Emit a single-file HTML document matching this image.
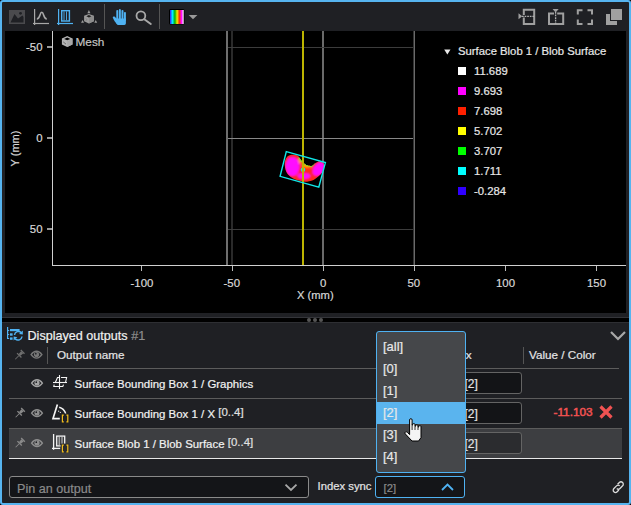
<!DOCTYPE html>
<html><head><meta charset="utf-8">
<style>
html,body{margin:0;padding:0;background:#000;width:631px;height:505px;overflow:hidden}
*{box-sizing:border-box}
#frame{position:absolute;left:0;top:0;width:631px;height:505px;border:2px solid #56b4f0;border-radius:3px;background:#1f2024;overflow:hidden}
.t{position:absolute;font-family:"Liberation Sans",sans-serif;white-space:nowrap;line-height:1;-webkit-text-stroke:0.2px currentColor}
svg{position:absolute;left:0;top:0}
</style></head><body>
<div id="frame"></div>
<!-- plot bg -->
<div style="position:absolute;left:5px;top:31px;width:621px;height:282px;background:#000"></div>
<!-- splitter -->
<div style="position:absolute;left:2px;top:317px;width:627px;height:1px;background:#34353a"></div>
<div style="position:absolute;left:2px;top:318px;width:627px;height:4px;background:#000"></div>
<div style="position:absolute;left:2px;top:322px;width:627px;height:1px;background:#2e2f33"></div>

<svg width="631" height="505" viewBox="0 0 631 505">
  <!-- ===== toolbar ===== -->
  <!-- image icon -->
  <rect x="9" y="10" width="16" height="14" fill="#4a4a4d"/>
  <path d="M10.5 22.5 L14.5 14 L18 18.5 L22.5 15.5 L23.5 17 L23.5 22.5 Z" fill="#1f2024"/>
  <circle cx="20.5" cy="13.3" r="1.4" fill="#1f2024"/>
  <!-- curve icon -->
  <g stroke="#a8a8a8" stroke-width="1.2" fill="none">
    <path d="M34.6 9 V25"/><path d="M33 23.5 H49"/>
    <path d="M36.8 19 C38.6 19 39.2 17.5 40 15 C40.6 13 41.1 12.3 41.8 12.3 C42.5 12.3 43 13 43.6 15 C44.4 17.5 45 19 46.8 19" stroke-width="1.6"/>
  </g>
  <!-- blue bar icon -->
  <g stroke="#4fb2f2" fill="none">
    <path d="M58.6 9 V25" stroke-width="1.2"/><path d="M57 23.5 H73" stroke-width="1.2"/>
    <rect x="61.7" y="10.7" width="7.7" height="10.3" stroke-width="1.4"/>
    <path d="M64 11.4 V20.3 M66.5 11.4 V20.3" stroke-width="0.9"/>
  </g>
  <!-- cube axes icon -->
  <path d="M88.9 10 L90.4 13.2 L87.4 13.2 Z" fill="#9a9a9a"/>
  <path d="M88.9 14.1 L93.9 15.8 L93.9 21.3 L88.9 23.4 L84.1 21.3 L84.1 15.8 Z" fill="#9c9c9c"/>
  <path d="M88.9 17.6 L93.9 15.8 L93.9 21.3 L88.9 23.4 Z" fill="#8c8c8c"/>
  <path d="M88.9 14.9 L91.5 16.2 L88.9 17.5 L86.3 16.2 Z" fill="#202020"/>
  <path d="M85.6 18.5 L87.2 19.6 L85.6 20.7" stroke="#7a7a7a" stroke-width="0.7" fill="none"/>
  <path d="M81 22.8 L82.6 20 L84 22.8 Z" fill="#9a9a9a"/>
  <path d="M94.3 22.8 L95.7 20 L97.2 22.8 Z" fill="#9a9a9a"/>
  <rect x="104" y="4" width="1" height="25" fill="#555"/>
  <!-- hand -->
  <g fill="#4fb2f2">
    <path d="M116.3 18.5 L116.3 23.2 C116.8 24.4 117.5 25 118.5 25 L124.3 25 C125.3 25 125.9 24 125.9 23 L125.9 18.5 Z"/>
    <rect x="116.3" y="9.9" width="1.95" height="11" rx="0.97"/>
    <rect x="118.9" y="9" width="1.95" height="12" rx="0.97"/>
    <rect x="121.5" y="9.9" width="1.95" height="11" rx="0.97"/>
    <rect x="123.95" y="11.9" width="1.95" height="9" rx="0.97"/>
    <path d="M112.8 17.8 C112.8 16.6 114 16 114.8 16.8 L117.4 19.6 L117.4 24.6 C115.6 22.8 113.8 20.2 112.8 17.8 Z"/>
  </g>
  <!-- magnifier -->
  <circle cx="140.9" cy="15.8" r="4.4" stroke="#a8a8a8" stroke-width="1.8" fill="none"/>
  <path d="M144.3 19.2 L150.8 24" stroke="#a8a8a8" stroke-width="2" stroke-linecap="round"/>
  <rect x="159" y="4" width="1" height="25" fill="#555"/>
  <!-- colormap -->
  <defs>
    <linearGradient id="cm" x1="0" x2="1" y1="0" y2="0">
      <stop offset="0" stop-color="#3a10ff"/>
      <stop offset="0.18" stop-color="#00f0ff"/>
      <stop offset="0.36" stop-color="#00b000"/>
      <stop offset="0.52" stop-color="#f0f000"/>
      <stop offset="0.68" stop-color="#ff2a00"/>
      <stop offset="0.84" stop-color="#ff10ff"/>
      <stop offset="1" stop-color="#ffffff"/>
    </linearGradient>
  </defs>
  <rect x="169" y="9" width="15.5" height="15.5" rx="1.5" fill="#000"/>
  <rect x="170" y="10" width="13.7" height="14" fill="url(#cm)"/>
  <path d="M188.7 15 L197.4 15 L193 19.3 Z" fill="#9a9a9a"/>
  <!-- right toolbar icons -->
  <g fill="none" stroke="#a0a0a0" stroke-width="2">
    <path d="M523.8 15 V9.7 H534.2 V24 H523.8 V17.6"/>
    <path d="M554 13.5 H549 V24 H563.2 V13.5 H557.2"/>
  </g>
  <g stroke="#b0b0b0" stroke-width="1.3" stroke-dasharray="1.7 0.9" fill="none">
    <path d="M522 16.3 H535"/>
    <path d="M555.6 12 V25"/>
  </g>
  <path d="M518.5 13.3 L522.2 16.3 L518.5 19.3 Z" fill="#a0a0a0"/>
  <path d="M552.6 9 L558.7 9 L555.6 12.4 Z" fill="#a0a0a0"/>
  <g fill="none" stroke="#a0a0a0" stroke-width="2">
    <path d="M577.8 14.5 V10.2 H582.5"/>
    <path d="M587.5 10.2 H592 V14.5"/>
    <path d="M577.8 19.5 V24 H582.5"/>
    <path d="M587.5 24 H592 V19.5"/>
  </g>
  <rect x="611" y="9" width="11" height="11" fill="#a0a0a0"/>
  <path d="M606 14 H610 V21 H617 V25 H606 Z" fill="#a0a0a0"/>

  <!-- ===== plot ===== -->
  <g shape-rendering="crispEdges">
    <rect x="226" y="31" width="2" height="234" fill="#6e6e6e"/>
    <rect x="231" y="31" width="2" height="234" fill="#2a2a2a"/>
    <rect x="322" y="31" width="2" height="234" fill="#6a6a6a"/>
    <rect x="413" y="31" width="1" height="234" fill="#333"/>
    <rect x="414" y="31" width="1" height="234" fill="#6a6a6a"/>
    <rect x="228" y="47" width="185" height="1" fill="#3c3c3c"/>
    <rect x="228" y="138" width="185" height="1" fill="#888888"/>
    <rect x="228" y="229" width="185" height="1" fill="#3c3c3c"/>
    <rect x="302" y="31" width="2" height="234" fill="#bcb400"/>
    <!-- axes -->
    <rect x="52" y="31" width="1" height="235" fill="#d0d0d0"/>
    <rect x="52" y="265" width="574" height="1" fill="#d0d0d0"/>
    <rect x="47" y="46" width="5" height="2" fill="#999"/>
    <rect x="47" y="137" width="5" height="2" fill="#999"/>
    <rect x="47" y="228" width="5" height="2" fill="#999"/>
    <rect x="141" y="266" width="1" height="5" fill="#bbb"/>
    <rect x="232" y="266" width="1" height="5" fill="#bbb"/>
    <rect x="323" y="266" width="1" height="5" fill="#bbb"/>
    <rect x="414" y="266" width="1" height="5" fill="#bbb"/>
    <rect x="505" y="266" width="1" height="5" fill="#bbb"/>
    <rect x="596" y="266" width="1" height="5" fill="#bbb"/>
  </g>
  <!-- blob -->
  <defs>
    <filter id="bl" x="-20%" y="-20%" width="140%" height="140%"><feGaussianBlur stdDeviation="0.5"/></filter>
    <filter id="bl2" x="-50%" y="-50%" width="200%" height="200%"><feGaussianBlur stdDeviation="1.3"/></filter>
    <clipPath id="blobclip"><path d="M287.6 156.3 C285.5 158.5 284.5 161.5 284.7 164.6 C285 169 286 172 288 174.6 C291 178 295 180 298.8 180.4 C301.5 181.2 304.5 181.8 307.1 181.7 C310 181.5 313 180.5 315.4 178.8 C319 176 322 173.5 323.3 170.5 C324.5 167.5 324.3 164.5 323.3 163 C322.6 162 321.8 161.4 320.5 161.3 C319.2 161.3 318.2 161.5 317.9 161.7 C316.5 162.5 315.5 163 314.6 163.5 C313.5 165 312.5 165.8 311.3 165.9 C309.5 166 307.5 165.6 306.3 165 C304.5 164 303 162.5 302.1 161.3 C300.5 159.5 299.5 157 298 155.9 C296 154.5 292 154.6 289.8 155.2 C288.8 155.5 288 155.9 287.6 156.3 Z"/></clipPath>
  </defs>
  <g clip-path="url(#blobclip)">
    <rect x="280" y="150" width="48" height="36" fill="#ff2a18"/>
    <g filter="url(#bl2)">
      <ellipse cx="292.5" cy="166.5" rx="7.5" ry="10" fill="#ff10ff"/>
      <ellipse cx="318.5" cy="169" rx="5.5" ry="8" fill="#ff10ff" transform="rotate(35 318.5 169)"/>
      <ellipse cx="304" cy="176" rx="7" ry="3.5" fill="#ff10ff"/>
      <ellipse cx="307" cy="165.5" rx="5" ry="2.5" fill="#ffa000"/>
      <ellipse cx="300.5" cy="160" rx="2" ry="3.5" fill="#ff9a00"/>
    </g>
    <g filter="url(#bl)">
      <path d="M299 158 L303 162.5 L307 165.5 L311.5 166.2 L314.6 163.6" fill="none" stroke="#50ff30" stroke-width="1.2"/>
    </g>
    <circle cx="303" cy="169.8" r="2.2" fill="#20e0e0" filter="url(#bl)"/>
  </g>
  <rect x="302" y="31" width="2" height="234" fill="#bcb400" shape-rendering="crispEdges"/>
  <path d="M286.3 151.7 L325.4 162.6 L318.8 187.1 L280.1 176.3 Z" fill="none" stroke="#10e8e8" stroke-width="1.4"/>
  <!-- mesh cube -->
  <path d="M67.2 35.9 L72.5 38.6 L72.5 44.4 L67.2 47.1 L61.9 44.4 L61.9 38.6 Z" fill="#b4b4b4"/>
  <path d="M67.2 41.3 L72.5 38.6 L72.5 44.4 L67.2 47.1 Z" fill="#a8a8a8"/>
  <path d="M67.2 37.4 L70.3 38.9 L67.2 40.3 L64.1 38.9 Z" fill="#000"/>
  <path d="M63.4 42 L64.6 43 M64.8 43.2 L65.8 44" stroke="#444" stroke-width="0.9"/>
  <!-- legend squares -->
  <rect x="458" y="67" width="8" height="8" fill="#ffffff"/>
  <rect x="458" y="87" width="8" height="8" fill="#ff00ff"/>
  <rect x="458" y="107" width="8" height="8" fill="#ff2000"/>
  <rect x="458" y="127" width="8" height="8" fill="#ffff00"/>
  <rect x="458" y="147" width="8" height="8" fill="#00ff00"/>
  <rect x="458" y="167" width="8" height="8" fill="#00ffff"/>
  <rect x="458" y="187" width="8" height="8" fill="#3000ff"/>
  <path d="M444.2 49.5 L450.5 49.5 L447.35 54.6 Z" fill="#e8e8e8"/>
  <!-- splitter dots -->
  <circle cx="309" cy="320" r="2" fill="#555"/>
  <circle cx="315" cy="320" r="2" fill="#555"/>
  <circle cx="321" cy="320" r="2" fill="#555"/>
</svg>

<!-- plot text -->
<div class="t" style="left:75.5px;top:36.5px;font-size:11.8px;color:#c4c4c4">Mesh</div>
<div class="t" style="left:458px;top:46px;font-size:11.3px;color:#e8e8e8">Surface Blob 1 / Blob Surface</div>
<div class="t" style="left:474px;top:65.5px;font-size:11.3px;color:#e8e8e8">11.689</div>
<div class="t" style="left:474px;top:85.5px;font-size:11.3px;color:#e8e8e8">9.693</div>
<div class="t" style="left:474px;top:105.5px;font-size:11.3px;color:#e8e8e8">7.698</div>
<div class="t" style="left:474px;top:125.5px;font-size:11.3px;color:#e8e8e8">5.702</div>
<div class="t" style="left:474px;top:145.5px;font-size:11.3px;color:#e8e8e8">3.707</div>
<div class="t" style="left:474px;top:165.5px;font-size:11.3px;color:#e8e8e8">1.711</div>
<div class="t" style="left:474px;top:185.5px;font-size:11.3px;color:#e8e8e8">-0.284</div>

<div class="t" style="right:588.5px;top:41.5px;font-size:11.4px;color:#d8d8d8">-50</div>
<div class="t" style="right:588.5px;top:132.5px;font-size:11.4px;color:#d8d8d8">0</div>
<div class="t" style="right:588.5px;top:223.5px;font-size:11.4px;color:#d8d8d8">50</div>
<div class="t" style="left:130.5px;top:277.5px;font-size:11.4px;color:#d8d8d8">-100</div>
<div class="t" style="left:223.5px;top:277.5px;font-size:11.4px;color:#d8d8d8">-50</div>
<div class="t" style="left:320px;top:277.5px;font-size:11.4px;color:#d8d8d8">0</div>
<div class="t" style="left:407.5px;top:277.5px;font-size:11.4px;color:#d8d8d8">50</div>
<div class="t" style="left:496px;top:277.5px;font-size:11.4px;color:#d8d8d8">100</div>
<div class="t" style="left:587px;top:277.5px;font-size:11.4px;color:#d8d8d8">150</div>
<div class="t" style="left:297px;top:289.5px;font-size:11.2px;color:#d8d8d8">X (mm)</div>
<div class="t" style="left:-3px;top:143px;font-size:11px;color:#d8d8d8;transform:rotate(-90deg);transform-origin:center;width:36px;text-align:center">Y (mm)</div>


<!-- ===== bottom panel ===== -->
<div style="position:absolute;left:9px;top:428px;width:613px;height:30px;background:#3d3e41"></div>
<div style="position:absolute;left:9px;top:368px;width:610px;height:1px;background:#5c5c5c"></div>
<div style="position:absolute;left:9px;top:398px;width:613px;height:1px;background:#5c5c5c"></div>
<div style="position:absolute;left:9px;top:428px;width:613px;height:1px;background:#5c5c5c"></div>
<div style="position:absolute;left:9px;top:458px;width:613px;height:1px;background:#e8e8e8"></div>
<div style="position:absolute;left:47px;top:347px;width:1px;height:17px;background:#555"></div>
<div style="position:absolute;left:523px;top:347px;width:1px;height:17px;background:#555"></div>
<!-- index fields -->
<div style="position:absolute;left:455px;top:372px;width:67px;height:22px;border:1px solid #646464;border-radius:3px;background:#131417"></div>
<div style="position:absolute;left:455px;top:402px;width:67px;height:22px;border:1px solid #646464;border-radius:3px;background:#131417"></div>
<div style="position:absolute;left:455px;top:432px;width:67px;height:22px;border:1px solid #646464;border-radius:3px;background:#2b2c2f"></div>
<!-- bottom controls -->
<div style="position:absolute;left:9px;top:476px;width:300px;height:22px;border:1px solid #8a8a8a;border-radius:3px;background:#141518"></div>
<div style="position:absolute;left:375px;top:476px;width:90px;height:22px;border:1px solid #4fb2f2;border-radius:3px;background:#141518"></div>

<svg width="631" height="505" viewBox="0 0 631 505">
  <!-- displayed outputs icon -->
  <g fill="#4fb2f2">
    <rect x="7" y="327" width="1.2" height="12"/>
    <rect x="7" y="330" width="2.2" height="1"/><rect x="7" y="334" width="2.2" height="1"/><rect x="7" y="338" width="2.2" height="1"/>
    <rect x="10" y="329" width="9.6" height="2.2"/>
    <rect x="10" y="333.3" width="2.6" height="2.4"/>
    <rect x="10" y="337.4" width="2.6" height="2.4"/>
  </g>
  <g fill="none" stroke="#4fb2f2" stroke-width="1.5">
    <path d="M14.5 335 A4 4 0 0 1 21.3 332.6"/>
    <path d="M22 336.5 A4 4 0 0 1 15.2 338.9"/>
  </g>
  <path d="M22.8 330.6 L22.8 334.6 L19 334 Z" fill="#4fb2f2"/>
  <path d="M13.6 340.5 L13.6 336.6 L17.4 337.2 Z" fill="#4fb2f2"/>
  <!-- panel chevron -->
  <path d="M611 332 L618 339 L625 332" fill="none" stroke="#a8a8a8" stroke-width="2.2"/>
  <!-- pins -->
  <g fill="#6e6e6e" transform="translate(19.4 355.1) rotate(45)">
    <rect x="-2.6" y="-5.2" width="5.2" height="1.3"/>
    <path d="M-1.5 -3.9 H1.5 L1.2 -0.2 H-1.2 Z"/>
    <rect x="-3.1" y="-0.4" width="6.2" height="1.3"/>
    <rect x="-0.45" y="0.9" width="0.9" height="5"/>
  </g>
  <g transform="translate(0.4 58)"><g fill="#8a8a8a" transform="translate(19.4 355.1) rotate(45)">
    <rect x="-2.6" y="-5.2" width="5.2" height="1.3"/>
    <path d="M-1.5 -3.9 H1.5 L1.2 -0.2 H-1.2 Z"/>
    <rect x="-3.1" y="-0.4" width="6.2" height="1.3"/>
    <rect x="-0.45" y="0.9" width="0.9" height="5"/>
  </g></g>
  <g transform="translate(0.4 88)"><g fill="#8a8a8a" transform="translate(19.4 355.1) rotate(45)">
    <rect x="-2.6" y="-5.2" width="5.2" height="1.3"/>
    <path d="M-1.5 -3.9 H1.5 L1.2 -0.2 H-1.2 Z"/>
    <rect x="-3.1" y="-0.4" width="6.2" height="1.3"/>
    <rect x="-0.45" y="0.9" width="0.9" height="5"/>
  </g></g>
  <!-- eyes -->
  <g transform="translate(0 0)">
    <path d="M31.1 354.7 C33 351.9 35 351.3 36.5 351.3 C38 351.3 40 351.9 41.9 354.7 C40 357.5 38 358.1 36.5 358.1 C35 358.1 33 357.5 31.1 354.7 Z" fill="none" stroke="#787878" stroke-width="1.4"/>
    <circle cx="36.5" cy="354.6" r="2.6" fill="#787878"/>
    <circle cx="35.8" cy="353.7" r="0.85" fill="#1f2024"/>
  </g>
  <g transform="translate(0.5 28.5)">
    <path d="M31.1 354.7 C33 351.9 35 351.3 36.5 351.3 C38 351.3 40 351.9 41.9 354.7 C40 357.5 38 358.1 36.5 358.1 C35 358.1 33 357.5 31.1 354.7 Z" fill="none" stroke="#a4a4a4" stroke-width="1.4"/>
    <circle cx="36.5" cy="354.6" r="2.6" fill="#a4a4a4"/>
    <circle cx="35.8" cy="353.7" r="0.85" fill="#1f2024"/>
  </g>
  <g transform="translate(0.5 58.5)">
    <path d="M31.1 354.7 C33 351.9 35 351.3 36.5 351.3 C38 351.3 40 351.9 41.9 354.7 C40 357.5 38 358.1 36.5 358.1 C35 358.1 33 357.5 31.1 354.7 Z" fill="none" stroke="#8e8e8e" stroke-width="1.4"/>
    <circle cx="36.5" cy="354.6" r="2.6" fill="#8e8e8e"/>
    <circle cx="35.8" cy="353.7" r="0.85" fill="#1f2024"/>
  </g>
  <g transform="translate(0.5 88.5)">
    <path d="M31.1 354.7 C33 351.9 35 351.3 36.5 351.3 C38 351.3 40 351.9 41.9 354.7 C40 357.5 38 358.1 36.5 358.1 C35 358.1 33 357.5 31.1 354.7 Z" fill="none" stroke="#8e8e8e" stroke-width="1.4"/>
    <circle cx="36.5" cy="354.6" r="2.6" fill="#8e8e8e"/>
    <circle cx="35.8" cy="353.7" r="0.85" fill="#1f2024"/>
  </g>
  <!-- graphics icon row1 -->
  <g fill="none" stroke="#f4f4f4" stroke-width="1.1">
    <path d="M59.5 375 V389"/>
    <path d="M53 382.5 H67"/>
    <path d="M55.3 382.5 L57.5 377.5 H59.5 M61 377.5 H66.6 L65.5 382.5"/>
    <path d="M54.2 384.6 L53.8 386.5 H62.8 L63.5 384.6"/>
  </g>
  <!-- angle icon row2 -->
  <g fill="none" stroke="#f4f4f4" stroke-width="1.7">
    <path d="M57.4 404.5 L53 418.6 H59.8"/>
    <path d="M59.2 407.3 C62 408 64.6 410.5 65.8 413.8" stroke-width="1.5"/>
  </g>
  <circle cx="58.6" cy="411.2" r="0.7" fill="#ccc"/><circle cx="60.4" cy="412.4" r="0.7" fill="#ccc"/>
  <rect x="60.6" y="413.6" width="8.8" height="9" fill="#1f2024"/>
  <g fill="none" stroke="#f0bc1c" stroke-width="1.2">
    <path d="M63.8 415.2 H62.4 V421.8 H63.8"/><path d="M66.4 415.2 H67.8 V421.8 H66.4"/>
  </g>
  <!-- blob icon row3 -->
  <g fill="none" stroke="#f4f4f4" stroke-width="1.3">
    <path d="M53.6 434 V449.8"/><path d="M52 448.4 H60.2"/>
    <rect x="56.7" y="436.1" width="8" height="9.8"/>
  </g>
  <path d="M59.2 437 V445 M62 437 V445" stroke="#e0e0e0" stroke-width="0.9" fill="none"/>
  <rect x="60.6" y="443.6" width="8.8" height="9" fill="#2a2b2e"/>
  <g fill="none" stroke="#f0bc1c" stroke-width="1.2">
    <path d="M63.8 445.2 H62.4 V451.8 H63.8"/><path d="M66.4 445.2 H67.8 V451.8 H66.4"/>
  </g>
  <!-- red X -->
  <path d="M600.5 406.5 L611.5 417.5 M611.5 406.5 L600.5 417.5" stroke="#f05252" stroke-width="3.2"/>
  <!-- pin output chevron -->
  <path d="M285.5 484.6 L291 490 L296.5 484.6" fill="none" stroke="#a8a8a8" stroke-width="1.8"/>
  <!-- index sync chevron up -->
  <path d="M442 490 L447.5 484.5 L453 490" fill="none" stroke="#4fb2f2" stroke-width="1.8"/>
  <!-- link icon -->
  <g fill="none" stroke="#dcdcdc" stroke-width="1.5" transform="translate(618.2 487.2) scale(0.88) translate(-618.2 -486.8)">
    <path d="M617.5 483.5 L619.5 481.5 C620.5 480.5 622.2 480.5 623.2 481.5 C624.2 482.5 624.2 484.2 623.2 485.2 L620.2 488.2 C619.2 489.2 617.6 489.2 616.6 488.2"/>
    <path d="M619 490 L617 492 C616 493 614.3 493 613.3 492 C612.3 491 612.3 489.3 613.3 488.3 L616.3 485.3 C617.3 484.3 618.9 484.3 619.9 485.3"/>
  </g>
</svg>

<!-- panel text -->
<div class="t" style="left:27.5px;top:329.5px;font-size:12.6px;color:#f0f0f0">Displayed outputs <span style="color:#8e8e8e">#1</span></div>
<div class="t" style="left:57px;top:349px;font-size:11.7px;color:#e4e4e4">Output name</div>
<div class="t" style="left:443px;top:349px;font-size:11.7px;color:#e4e4e4">Index</div>
<div class="t" style="left:529px;top:349px;font-size:11.7px;color:#e4e4e4">Value / Color</div>
<div class="t" style="left:74.5px;top:378.5px;font-size:11.45px;color:#f2f2f2">Surface Bounding Box 1 / Graphics</div>
<div class="t" style="left:74.5px;top:408.5px;font-size:11.45px;color:#f2f2f2">Surface Bounding Box 1 / X <span style="position:relative;top:-2px;color:#e0e0e0">[0..4]</span></div>
<div class="t" style="left:74.5px;top:438.5px;font-size:11.45px;color:#f2f2f2">Surface Blob 1 / Blob Surface <span style="position:relative;top:-2px;color:#e0e0e0">[0..4]</span></div>
<div class="t" style="left:464.5px;top:377.5px;font-size:12px;color:#e4e4e4">[2]</div>
<div class="t" style="left:464.5px;top:407.5px;font-size:12px;color:#e4e4e4">[2]</div>
<div class="t" style="left:464.5px;top:437.5px;font-size:12px;color:#e4e4e4">[2]</div>
<div class="t" style="left:553.5px;top:407px;font-size:11.8px;color:#f05252;-webkit-text-stroke:0.5px #f05252">-11.103</div>
<div class="t" style="left:17px;top:483px;font-size:12.6px;color:#8a8a8a">Pin an output</div>
<div class="t" style="left:317.5px;top:481px;font-size:11.3px;color:#e4e4e4">Index sync</div>
<div class="t" style="left:383.5px;top:483px;font-size:11.3px;color:#8a8a8a">[2]</div>

<!-- popup -->
<div style="position:absolute;left:376px;top:331px;width:90px;height:142px;border:1px solid #4fb2f2;border-radius:3px;background:#45474a;z-index:5;overflow:hidden">
  <div style="position:absolute;left:0;top:70px;width:88px;height:22px;background:#5ab4ee"></div>
  <div class="t" style="left:6px;top:8px;font-size:13px;color:#e8e8e8">[all]</div>
  <div class="t" style="left:6px;top:30px;font-size:13px;color:#e8e8e8">[0]</div>
  <div class="t" style="left:6px;top:52px;font-size:13px;color:#e8e8e8">[1]</div>
  <div class="t" style="left:6px;top:74px;font-size:13px;color:#e8e8e8">[2]</div>
  <div class="t" style="left:6px;top:96px;font-size:13px;color:#e8e8e8">[3]</div>
  <div class="t" style="left:6px;top:118px;font-size:13px;color:#e8e8e8">[4]</div>
</div>
<!-- cursor -->
<svg width="631" height="505" viewBox="0 0 631 505" style="z-index:6">
  <path d="M409.6 420 Q409.6 418.7 410.85 418.7 Q412.1 418.7 412.1 420 L412.1 425.2 L412.4 425.2 L412.4 424.4 Q412.4 423.7 413.7 423.7 Q415 423.7 415 424.4 L415 426.3 L415.4 426.3 L415.4 425.6 Q415.4 424.9 416.7 424.9 Q418 424.9 418 425.6 L418 427.2 L418.4 427.2 L418.4 426.5 Q418.4 425.8 419.7 425.8 Q421 425.8 421 426.5 L421 437.6 L418.6 441 L412 441 L405.2 433.8 Q404.4 432.6 405.5 432 Q406.6 431.5 407.6 432.5 L409.6 434.6 Z" fill="#f4f4f4" stroke="#000" stroke-width="1"/>
  <path d="M412.1 425.2 V430 M415 426.3 V430 M418 427.2 V430" stroke="#000" stroke-width="0.8"/>
</svg>

</body></html>
